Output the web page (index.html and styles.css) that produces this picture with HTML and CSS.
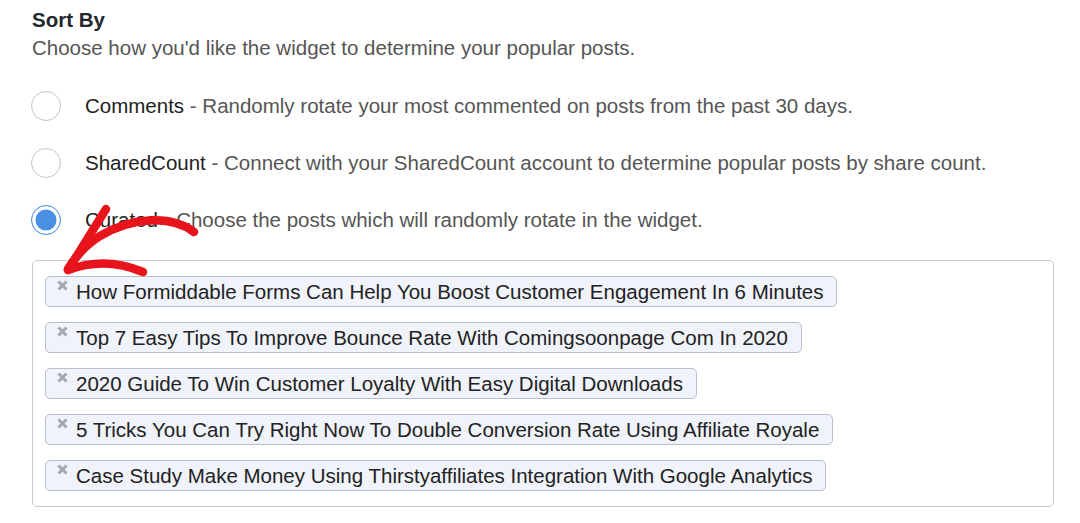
FILE: index.html
```html
<!DOCTYPE html>
<html lang="en">
<head>
  <meta charset="UTF-8" />
  <title>Sort By</title>
  <link rel="stylesheet" href="styles.css">
</head>
<body>

  <h3 class="title">Sort By</h3>
  <p class="desc">Choose how you'd like the widget to determine your popular posts.</p>

  <div class="options">
    <label class="option">
      <span class="radio"></span>
      <span><b>Comments</b> - Randomly rotate your most commented on posts from the past 30 days.</span>
    </label>
    <label class="option">
      <span class="radio"></span>
      <span><b>SharedCount</b> - Connect with your SharedCount account to determine popular posts by share count.</span>
    </label>
    <label class="option">
      <span class="radio checked"></span>
      <span><b>Curated</b> - Choose the posts which will randomly rotate in the widget.</span>
    </label>
  </div>

  <div class="post-box">
    <div class="tag">
      <svg class="remove" width="11" height="11" viewBox="0 0 11 11"><path d="M1.5 1.5L9.5 9.5M9.5 1.5L1.5 9.5"/></svg>
      <span>How Formiddable Forms Can Help You Boost Customer Engagement In 6 Minutes</span>
    </div>
    <div class="tag">
      <svg class="remove" width="11" height="11" viewBox="0 0 11 11"><path d="M1.5 1.5L9.5 9.5M9.5 1.5L1.5 9.5"/></svg>
      <span>Top 7 Easy Tips To Improve Bounce Rate With Comingsoonpage Com In 2020</span>
    </div>
    <div class="tag">
      <svg class="remove" width="11" height="11" viewBox="0 0 11 11"><path d="M1.5 1.5L9.5 9.5M9.5 1.5L1.5 9.5"/></svg>
      <span>2020 Guide To Win Customer Loyalty With Easy Digital Downloads</span>
    </div>
    <div class="tag">
      <svg class="remove" width="11" height="11" viewBox="0 0 11 11"><path d="M1.5 1.5L9.5 9.5M9.5 1.5L1.5 9.5"/></svg>
      <span>5 Tricks You Can Try Right Now To Double Conversion Rate Using Affiliate Royale</span>
    </div>
    <div class="tag">
      <svg class="remove" width="11" height="11" viewBox="0 0 11 11"><path d="M1.5 1.5L9.5 9.5M9.5 1.5L1.5 9.5"/></svg>
      <span>Case Study Make Money Using Thirstyaffiliates Integration With Google Analytics</span>
    </div>
  </div>

  <!-- hand drawn arrow over the page -->
  <svg class="arrow" width="1080" height="523" viewBox="0 0 1080 523">
    <path d="M194 232 C170 214 130 218 100 236 C86 245 75 257 68 269"/>
    <path d="M106 209 L68 270"/>
    <path d="M68 270 Q105 256 143 272"/>
  </svg>

</body>
</html>
```

FILE: styles.css
```css
body {
  font-family: "Liberation Sans", Arial, sans-serif;
  background-color: #ffffff;
  color: #222;
  margin: 0;
  padding: 8px 26px 16px 32px;
  position: relative;
}

.title {
  font-size: 20.5px;
  line-height: 24px;
  font-weight: bold;
  color: #23282d;
  margin: 0 0 4px;
}

.desc {
  font-size: 20.5px;
  line-height: 24px;
  color: #555;
  margin: 0 0 31px;
}

.options {
  display: flex;
  flex-direction: column;
  gap: 27px;
}

.option {
  display: flex;
  align-items: center;
  height: 30px;
  font-size: 20.5px;
  line-height: 24px;
  color: #555;
}

.option b {
  font-weight: normal;
  color: #222;
}

.radio {
  box-sizing: border-box;
  width: 30px;
  height: 30px;
  border: 1px solid #c4c4c4;
  border-radius: 50%;
  background: #fff;
  margin-left: -1px;
  margin-right: 24px;
  flex-shrink: 0;
}

.radio.checked {
  border-color: #5b9bd5;
  border-width: 1.5px;
  box-shadow: inset 0 0 0 3.5px #fff;
  background-color: #4a90e2;
}

.post-box {
  margin-top: 25px;
  border: 1px solid #c3cbd4;
  border-radius: 5px;
  padding: 15px 12px;
  display: flex;
  flex-direction: column;
  align-items: flex-start;
  gap: 15px;
}

.tag {
  display: flex;
  align-items: flex-start;
  gap: 8px;
  height: 29px;
  border: 1px solid #b5c0cc;
  border-radius: 5px;
  background-color: #f0f3fa;
  padding: 0 13px 0 11px;
  font-size: 20.5px;
  line-height: 29px;
  color: #222;
}

.remove {
  margin-top: 3px;
  flex-shrink: 0;
}

.remove path {
  stroke: #a0a8b2;
  stroke-width: 3;
  fill: none;
}

.arrow {
  position: absolute;
  top: 0;
  left: 0;
  pointer-events: none;
}

.arrow path {
  fill: none;
  stroke: #e8141b;
  stroke-width: 8.5;
  stroke-linecap: round;
  stroke-linejoin: round;
}
```
